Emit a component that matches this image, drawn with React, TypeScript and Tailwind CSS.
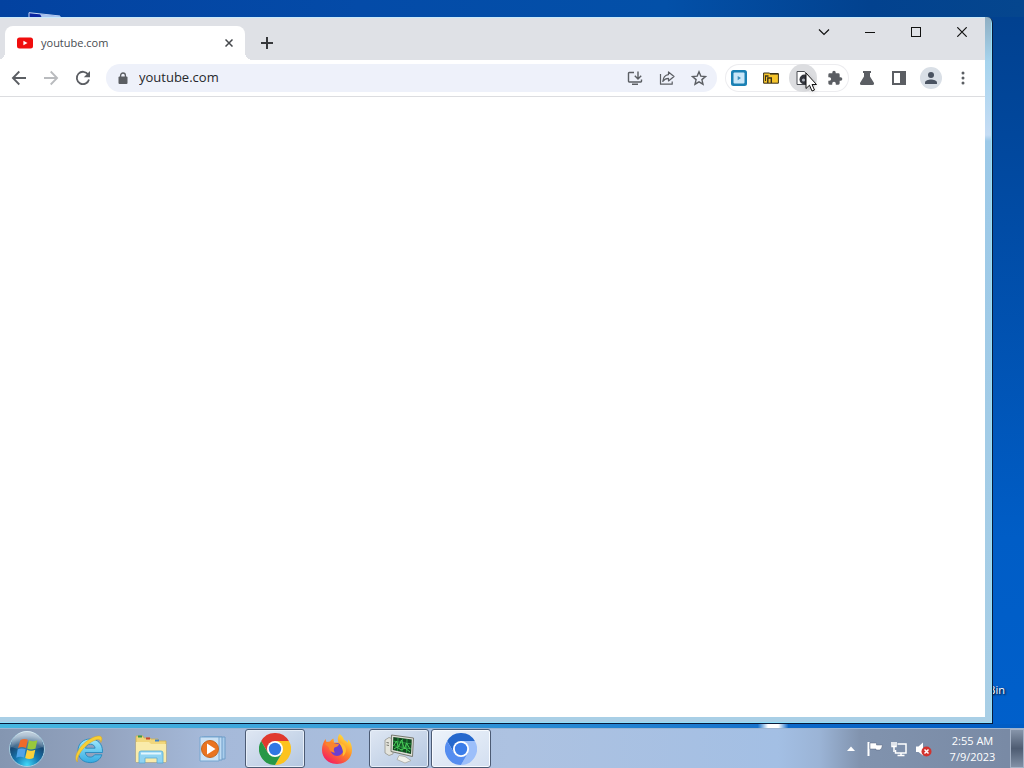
import React from 'react';

interface IconProps {
  className?: string;
}

const BackIcon = ({ className = 'size-4' }: IconProps) => (
  <svg viewBox="0 0 16 16" className={className} fill="none" stroke="currentColor" strokeWidth="1.8">
    <path d="M15 8H2M8.300 1.500 1.900 8l6.400 6.500" />
  </svg>
);

const ReloadIcon = () => (
  <svg viewBox="0 0 16 16" className="size-4">
    <path d="M13.200 4.600A6.200 6.200 0 1 0 14 9.500" fill="none" stroke="currentColor" strokeWidth="1.800" />
    <path d="M15 1v6.200H8.800z" fill="currentColor" />
  </svg>
);

const LockIcon = () => (
  <svg viewBox="0 0 10 13" className="h-[13px] w-2.5">
    <rect x="0.500" y="4.500" width="9" height="7.500" rx="1" fill="currentColor" />
    <path d="M2.600 5V3.400a2.400 2.400 0 0 1 4.800 0V5" fill="none" stroke="currentColor" strokeWidth="1.300" />
  </svg>
);

const InstallIcon = () => (
  <svg viewBox="0 0 16 16" className="size-4" fill="none" stroke="currentColor" strokeWidth="1.400">
    <path d="M7 2.500H2.200q-.7 0-.7.7v8.100q0 .7.7.7h11.600q.7 0 .7-.7V9.500M5 14.300h6" />
    <path d="M11 1.500v7M7.800 5.800 11 9l3.200-3.200" />
  </svg>
);

const ShareIcon = () => (
  <svg viewBox="0 0 16 16" className="size-4" fill="none" stroke="currentColor" strokeWidth="1.200" strokeLinejoin="round">
    <path d="M1.500 4v10.200h11.700v-2.700" />
    <path d="M9.500 2v2.600C6 5 4.200 7.500 3.800 11.500c1.500-2.300 3.200-3.200 5.700-3.200V11L15 6.500z" />
  </svg>
);

const StarIcon = () => (
  <svg viewBox="0 0 16 16" className="size-4" fill="none" stroke="currentColor" strokeWidth="1.400">
    <path d="m8 1.800 1.800 4.300 4.700.4-3.600 3.100 1.100 4.600L8 11.800l-4 2.400 1.100-4.600-3.600-3.100 4.700-.4z" />
  </svg>
);

const PlayerExtIcon = () => (
  <svg viewBox="0 0 16 16" className="size-4">
    <rect width="16" height="16" rx="2.500" fill="#1a80b4" />
    <rect x="2.500" y="2.500" width="11" height="11" rx="1" fill="#c9e6f8" />
    <path d="M6.700 6v4.200L10 8z" fill="#3d8fbd" />
  </svg>
);

const FolderExtIcon = () => (
  <svg viewBox="0 0 16 12" className="h-3 w-4">
    <path d="M.6 1h5.600l1 .8h8.200v9.400H.6z" fill="#f5c42c" stroke="#39301a" />
    <path d="M7 1.700h8.400" stroke="#39301a" strokeWidth="1.400" />
    <path d="M2 4h3.500M4.800 11V6h3.500v5" fill="none" stroke="#39301a" strokeWidth="1.400" />
    <path d="M2.500 4v5" stroke="#39301a" />
  </svg>
);

const PageExtIcon = () => (
  <svg viewBox="0 0 16 16" className="size-4">
    <path d="M2 1.500h7.500l2.500 3v10H2z" fill="#fff" stroke="#4a4d52" />
    <circle cx="9.500" cy="9.500" r="5" fill="#33363d" />
    <circle cx="8.500" cy="10" r="1.600" fill="#aeb4bd" />
  </svg>
);

const PuzzleIcon = () => (
  <svg viewBox="0 0 24 24" className="size-4" fill="currentColor">
    <path d="M20.500 11H19V7a2 2 0 0 0-2-2h-4V3.500a2.500 2.500 0 0 0-5 0V5H4a2 2 0 0 0-2 2v3.800h1.500a2.700 2.700 0 0 1 0 5.400H2V20a2 2 0 0 0 2 2h3.800v-1.500a2.700 2.700 0 0 1 5.400 0V22H17a2 2 0 0 0 2-2v-4h1.500a2.500 2.500 0 0 0 0-5z" />
  </svg>
);

const FlaskIcon = () => (
  <svg viewBox="0 0 16 16" className="size-4" fill="currentColor">
    <path d="M4 1h8v2h-1v3.500l4 6.500q.6 2-1.500 2h-11Q.4 15 1 13l4-6.500V3H4z" />
  </svg>
);

const SidePanelIcon = () => (
  <svg viewBox="0 0 16 16" className="size-4">
    <path fillRule="evenodd" d="M1 1h14v14H1zM3 3v10h6V3z" fill="currentColor" />
  </svg>
);

const PersonIcon = () => (
  <svg viewBox="0 0 14 14" className="size-3.5" fill="currentColor">
    <circle cx="7" cy="4" r="3" />
    <path d="M1 13v-1.500C1 9.500 4.500 8.500 7 8.500s6 1 6 3V13z" />
  </svg>
);

const MoreIcon = () => (
  <svg viewBox="0 0 16 16" className="size-4" fill="currentColor">
    <circle cx="8" cy="3" r="1.500" />
    <circle cx="8" cy="8" r="1.500" />
    <circle cx="8" cy="13" r="1.500" />
  </svg>
);

const StartOrb = () => (
  <svg viewBox="0 0 38 38" className="size-[38px]">
    <defs>
      <radialGradient id="orb" cx="50%" cy="95%" r="85%">
        <stop offset="0" stopColor="#3fd8f8" />
        <stop offset="0.400" stopColor="#1679b2" />
        <stop offset="0.750" stopColor="#174873" />
        <stop offset="1" stopColor="#6d8fae" />
      </radialGradient>
      <linearGradient id="orbShine" x2="0" y2="1">
        <stop offset="0" stopColor="#fff" stopOpacity="0.600" />
        <stop offset="1" stopColor="#fff" stopOpacity="0.100" />
      </linearGradient>
    </defs>
    <circle cx="19" cy="19" r="17.500" fill="url(#orb)" stroke="#a5cde0" />
    <path d="M3 17a16 16 0 0 1 32 0q-16 6-32 0z" fill="url(#orbShine)" />
    <path d="M12.500 10q4-2 7.300-.2L18 18q-4-1.800-8 0z" fill="#ef6a2a" />
    <path d="M21 10.300q4 2 8.300 0L27.500 18.500q-4.500 2-8.300 0z" fill="#98c83c" />
    <path d="M9.700 19.300q4-1.800 8 0L16 27.500q-4-1.600-7.700.2z" fill="#4fa3e8" />
    <path d="M19 19.800q4 1.800 8.300 0L25.500 28q-4.300 2-8.300 0z" fill="#fbd13b" />
  </svg>
);

const ExplorerEIcon = () => (
  <svg viewBox="0 0 32 32" className="size-8">
    <defs>
      <linearGradient id="ieBlue" x2="0" y2="1">
        <stop offset="0" stopColor="#9fe8fc" />
        <stop offset="1" stopColor="#35abe2" />
      </linearGradient>
    </defs>
    <path
      d="M29.500 19.500H12.300c.2 3 2.300 4.600 4.900 4.600 2 0 3.600-.9 4.500-2.300h7.200C27.300 26.700 23 29.600 17.200 29.600 10 29.600 5 24.800 5 17.800 5 10.700 10 6 17.200 6c7.600 0 12.300 5 12.300 12.200zM12.500 15.200h9.600c-.3-2.500-2-4-4.700-4-2.600 0-4.400 1.500-4.900 4z"
      fill="url(#ieBlue)"
      stroke="#2689bd"
      strokeWidth="0.900"
    />
    <path d="M4.500 29C-.5 25 6 13 15.500 7 22 2.800 28 1.500 28.800 5c.3 1.300-.2 3-1 4.500.2-2.500-1.500-3.500-4.600-2.700-4 1-8.500 4.200-12 8C6.500 19.700 3.500 25.500 4.500 29z" fill="#f7cf35" stroke="#dca51a" strokeWidth="0.500" />
  </svg>
);

const FilesIcon = () => (
  <svg viewBox="0 0 32 32" className="size-8">
    <path d="M1 5V3h7l1 2h6l1 1h7l1 2h7v21H1z" fill="#f1d77c" stroke="#cfaf52" strokeWidth="0.800" />
    <path d="M3 3.500h4" stroke="#3a9a46" strokeWidth="2" />
    <path d="M11 5.500h4" stroke="#c9452e" strokeWidth="2" />
    <path d="M20 7.500h4" stroke="#3f83c8" strokeWidth="2" />
    <path d="M1 9h13l2 2h15v18H1z" fill="#f9ebaa" />
    <path d="M4 30V20q0-2 2-2h20q2 0 2 2v10h-6v-5H10v5z" fill="#8fd3f2" stroke="#58a9d4" strokeWidth="0.800" />
    <path d="M6 20.500h20" stroke="#e3f6ff" strokeWidth="2" />
  </svg>
);

const MediaPlayerIcon = () => (
  <svg viewBox="0 0 28 28" className="size-7">
    <path d="M5 2h21v22H5z" fill="#a9cdec" stroke="#6e9dc8" />
    <path d="M3 2h20v23H3z" fill="#bfdcf3" stroke="#6e9dc8" />
    <path d="M1 2h19v24H1z" fill="#cbe2f5" stroke="#77a6d0" />
    <circle cx="11" cy="14" r="8.500" fill="#ea7420" stroke="#c4671f" />
    <path d="M8 8.500v11l8.500-5.500z" fill="#fff" />
  </svg>
);

const ChromeIcon = () => (
  <svg viewBox="0 0 32 32" className="size-8">
    <path d="M16 8h13.860A16 16 0 0 0 2.140 8L9.100 20z" fill="#e0392e" />
    <path d="M29.860 8A16 16 0 0 1 16 32l6.900-12L16 8z" fill="#fcc31e" />
    <path d="M2.140 8A16 16 0 0 0 16 32l6.900-12L9.100 20z" fill="#279847" />
    <circle cx="16" cy="16" r="8" fill="#fff" />
    <circle cx="16" cy="16" r="6.200" fill="#2f77e4" />
  </svg>
);

const ChromiumIcon = () => (
  <svg viewBox="0 0 32 32" className="size-8">
    <path d="M16 8h13.860A16 16 0 0 0 2.140 8L9.100 20z" fill="#2568cd" />
    <path d="M29.860 8A16 16 0 0 1 16 32l6.900-12L16 8z" fill="#9cbffa" />
    <path d="M2.140 8A16 16 0 0 0 16 32l6.900-12L9.100 20z" fill="#558df0" />
    <circle cx="16" cy="16" r="8" fill="#fff" />
    <circle cx="16" cy="16" r="6.200" fill="#3b7de9" />
  </svg>
);

const FirefoxIcon = () => (
  <svg viewBox="0 0 32 32" className="size-8">
    <defs>
      <linearGradient id="fox" x1="0.850" y1="0.100" x2="0.250" y2="0.950">
        <stop offset="0" stopColor="#ffe340" />
        <stop offset="0.450" stopColor="#ff8a24" />
        <stop offset="1" stopColor="#f5215e" />
      </linearGradient>
    </defs>
    <path d="M18.500 1c3 2 4 4 4.500 6 1.500.5 3 1.800 4 3V6.500C30 9 31 13 31 17c0 8-6.500 14-15 14S1 25 1 17c0-4 1.200-8 3.500-11l1 3 3.500-.500C10 7 11 6 12.500 5.500l.5 4h4.500C16 6 17 3 18.500 1z" fill="url(#fox)" />
    <circle cx="16" cy="16.500" r="6.500" fill="#6b3fcf" />
    <path d="M4 11c3-2.500 7-2.500 9-.500l5 .5c-.5 2.500-2.500 3-4.500 3.500-1 1.500-1 3.500.5 5-3.500 0-6-2-6-5z" fill="#fa842e" />
    <path d="M18 10c4 0 7 3 7 7 0 3-1.500 5-3.500 6.500 1-3 1-8-3.500-13.500z" fill="#ffbd33" />
  </svg>
);

const MonitorIcon = () => (
  <svg viewBox="0 0 32 32" className="size-8">
    <path d="M2 7 6 4.500l4 1.500v15l-4 1.500L2 20z" fill="#e4e4dc" stroke="#96968e" strokeWidth="0.800" />
    <path d="M3.500 9.500 6 10M3.500 12l2.500.5" stroke="#77776f" />
    <path d="M8.500 2 30.500 5 29.500 23.500 8 18.500z" fill="#dfe0d8" stroke="#777970" />
    <path d="M10.300 4 28.800 6.500 28 21 9.800 17z" fill="#134a22" />
    <path d="m10 8 18.500 3M10 12.500l18 3.500M15 5l-.5 13M19.500 5.500 19 19M24 6l-.5 14" stroke="#2aa244" strokeWidth="0.900" />
    <path d="m10.500 13 3-5 2 6 3-7 3 9 2-6 3.500 6M11 16l3-2 4 3 4-2 5 4" fill="none" stroke="#4bd058" />
    <path d="m16 22.500 6 1 6 4-6 2.500-8-3.500z" fill="#f0f0ea" stroke="#a2a298" strokeWidth="0.700" />
  </svg>
);

const FlagIcon = () => (
  <svg viewBox="0 0 16 16" className="size-4">
    <path d="M1.500 1v14" stroke="#fff" strokeWidth="2" />
    <path d="M3 2h6.500v2h6l-1 3.500-2 1.500H9V8H3z" fill="#fff" stroke="#54627c" strokeWidth="0.500" />
  </svg>
);

const NetworkIcon = () => (
  <svg viewBox="0 0 16 16" className="size-4" fill="none" stroke="#fff" strokeWidth="1.500">
    <path d="M6.500 3H15v9H4.500V9M10 12v2M6.500 14.500h7" />
    <path d="M1 1v4.500h4V1M3 1v10" />
  </svg>
);

const MutedIcon = () => (
  <svg viewBox="0 0 17 16" className="h-4 w-[17px]">
    <path d="M1 5.500h2.500L8 1.500v13L3.500 11H1z" fill="#fff" />
    <circle cx="11.500" cy="10.500" r="5" fill="#d2332e" />
    <path d="m9.500 8.500 4 4m0-4-4 4" stroke="#fff" strokeWidth="1.500" />
  </svg>
);

const toolButton = 'flex h-7 w-8 shrink-0 items-center justify-center';
const extButton = 'flex size-7 items-center justify-center rounded-full';
const windowButton = 'flex h-[30px] w-[46px] items-center justify-center';

const TabStrip = () => (
  <div className="flex h-[43px] shrink-0 items-end justify-between bg-[#dfe1e6] shadow-[inset_0_1px_0_#c9eafb]">
    <div className="flex items-end pl-[5px]">
      <div className="relative flex h-[34px] w-60 items-center rounded-t-lg bg-white pl-3 pr-2">
        <svg viewBox="0 0 16 12" className="h-3 w-4 shrink-0">
          <rect y="0.500" width="16" height="11" rx="2.500" fill="#f00d0d" />
          <path d="M6.400 3.700v4.600L10.500 6z" fill="#fff" />
        </svg>
        <span className="ml-2 flex-1 text-[11px] leading-4 text-[#484b50]">youtube.com</span>
        <button aria-label="Close tab" className="flex size-4 items-center justify-center text-[#45484c]">
          <svg viewBox="0 0 8 8" className="size-2" stroke="currentColor" strokeWidth="1.500">
            <path d="m0.500.5 7 7m0-7-7 7" />
          </svg>
        </button>
        <span className="absolute -left-2 bottom-0 size-2 bg-[radial-gradient(circle_at_top_left,transparent_8px,white_8px)]" />
        <span className="absolute -right-2 bottom-0 size-2 bg-[radial-gradient(circle_at_top_right,transparent_8px,white_8px)]" />
      </div>
      <button aria-label="New tab" className="ml-2 flex h-[34px] w-7 items-center justify-center text-[#36383b]">
        <svg viewBox="0 0 12 12" className="size-3" stroke="currentColor" strokeWidth="2">
          <path d="M6 0v12M0 6h12" />
        </svg>
      </button>
    </div>
    <div className="flex self-start">
      <button aria-label="Search tabs" className={windowButton}>
        <svg viewBox="0 0 12 8" className="h-2 w-3" fill="none" stroke="#111" strokeWidth="1.200">
          <path d="m1 1.500 5 5 5-5" />
        </svg>
      </button>
      <button aria-label="Minimize" className={windowButton}>
        <span className="h-px w-2.5 bg-[#111]" />
      </button>
      <button aria-label="Maximize" className={windowButton}>
        <span className="size-2.5 border border-[#111]" />
      </button>
      <button aria-label="Close" className={windowButton}>
        <svg viewBox="0 0 10 10" className="size-2.5" stroke="#111" strokeWidth="1.200">
          <path d="m.3.3 9.400 9.400m0-9.400L.3 9.700" />
        </svg>
      </button>
    </div>
  </div>
);

const Toolbar = () => (
  <div className="flex h-[37px] shrink-0 items-center border-b border-[#dcdde0] bg-white pl-[3px] pr-1.5 text-[#5b5e63]">
    <button aria-label="Back" className={toolButton}><BackIcon /></button>
    <button aria-label="Forward" className={`${toolButton} text-[#b9bbbe]`}>
      <BackIcon className="size-4 rotate-180" />
    </button>
    <button aria-label="Reload" className={toolButton}><ReloadIcon /></button>
    <div className="ml-[7px] flex h-7 flex-1 items-center rounded-full bg-[#eef1fa] pl-3 pr-0.5">
      <LockIcon />
      <input
        aria-label="Address"
        defaultValue="youtube.com"
        className="ml-[11px] min-w-0 flex-1 bg-transparent text-[13px] text-[#26282c] outline-none"
      />
      <button aria-label="Install" className={toolButton}><InstallIcon /></button>
      <button aria-label="Share" className={toolButton}><ShareIcon /></button>
      <button aria-label="Bookmark" className={toolButton}><StarIcon /></button>
    </div>
    <div className="ml-2 flex shrink-0 gap-1 rounded-full shadow-[inset_0_0_0_1px_#ececef]">
      <button aria-label="Player extension" className={extButton}><PlayerExtIcon /></button>
      <button aria-label="Folder extension" className={extButton}><FolderExtIcon /></button>
      <button aria-label="Page extension" className={`${extButton} relative bg-[#dcdde0]`}>
        <PageExtIcon />
        <svg viewBox="0 0 12 20" className="absolute left-4 top-2 z-10 h-5 w-3 drop-shadow-sm">
          <path d="M1 1v15.500l3.500-3.300L7 19l2.500-1-2.500-5.500h4.500z" fill="#fff" stroke="#111" />
        </svg>
      </button>
      <button aria-label="Extensions" className={extButton}><PuzzleIcon /></button>
    </div>
    <div className="ml-0.5 flex shrink-0">
      <button aria-label="Experiments" className={toolButton}><FlaskIcon /></button>
      <button aria-label="Side panel" className={toolButton}><SidePanelIcon /></button>
      <button aria-label="Profile" className={toolButton}>
        <span className="flex size-[22px] items-center justify-center rounded-full bg-[#d9dfe6] text-[#4a5361]">
          <PersonIcon />
        </span>
      </button>
      <button aria-label="Menu" className={toolButton}><MoreIcon /></button>
    </div>
  </div>
);

const TASKS = [
  { label: 'Internet Explorer', icon: <ExplorerEIcon />, state: 'pinned' },
  { label: 'Windows Explorer', icon: <FilesIcon />, state: 'pinned' },
  { label: 'Media Player', icon: <MediaPlayerIcon />, state: 'pinned' },
  { label: 'Chrome', icon: <ChromeIcon />, state: 'open' },
  { label: 'Firefox', icon: <FirefoxIcon />, state: 'pinned' },
  { label: 'System Monitor', icon: <MonitorIcon />, state: 'open' },
  { label: 'Chromium', icon: <ChromiumIcon />, state: 'active' },
];

const taskStyles: Record<string, string> = {
  pinned: 'border border-transparent',
  open: 'border border-[#4c5b74] bg-gradient-to-br from-[#dfe7f3] to-[#b4c7e0] shadow-[inset_0_0_0_1px_#e6eef8]',
  active: 'border border-[#4c5b74] bg-gradient-to-br from-[#edf3fb] to-[#d3dff0] shadow-[inset_0_0_0_1px_#f8fbff]',
};

const Taskbar = () => (
  <footer className="flex h-10 shrink-0 items-stretch border-t border-[#9db4d0] bg-[linear-gradient(90deg,#8496b1_0%,#93a3bf_10%,#a5b9d9_20%,#adc2e1_50%,#a3bfe4_76%,#9bb4d6_80%,#8193ae_84%,#7889a4_100%)]">
    <button aria-label="Start" className="flex w-[54px] items-center justify-center">
      <StartOrb />
    </button>
    <nav className="ml-[5px] flex flex-1 gap-0.5">
      {TASKS.map((task) => (
        <button
          key={task.label}
          aria-label={task.label}
          className={`flex w-[60px] items-center justify-center rounded-[3px] ${taskStyles[task.state]}`}
        >
          {task.icon}
        </button>
      ))}
    </nav>
    <div className="flex items-center">
      <button aria-label="Show hidden icons" className="flex w-6 justify-center">
        <svg viewBox="0 0 8 5" className="h-[5px] w-2"><path d="M0 5 4 .5 8 5z" fill="#fff" /></svg>
      </button>
      <button aria-label="Action Center" className="flex w-6 justify-center"><FlagIcon /></button>
      <button aria-label="Network" className="flex w-6 justify-center"><NetworkIcon /></button>
      <button aria-label="Volume" className="flex w-6 justify-center"><MutedIcon /></button>
    </div>
    <button className="flex w-[75px] flex-col items-center justify-center text-[11px] leading-4 text-white">
      <span>2:55 AM</span>
      <span>7/9/2023</span>
    </button>
    <button
      aria-label="Show desktop"
      className="w-3.5 border border-[#a5b2c6] bg-gradient-to-b from-[#8795aa] via-[#4e5c72] to-[#8190a6]"
    />
  </footer>
);

export default function App() {
  return (
    <div className="flex h-screen flex-col overflow-hidden bg-[linear-gradient(180deg,#01408e_0%,#014aa2_25%,#005dc6_70%,#0060cc_100%)] font-['Open_Sans','Noto_Sans',sans-serif]">
      <div className="relative flex min-h-0 flex-1 flex-col pb-1 pr-[31px] pt-[17px]">
        <div className="absolute inset-x-0 top-0 h-[17px] bg-[linear-gradient(90deg,#0342a0_0%,#044ba8_35%,#0350a8_65%,#02428f_85%,#05468e_100%)]" />
        {/* desktop shortcuts peeking out behind the window */}
        <svg viewBox="0 0 34 6" className="absolute left-7 top-3 h-1.5 w-[34px]">
          <path d="M1 6V.7L32 4v2" fill="#0b24a0" stroke="#c6d8f4" />
          <path d="m12 2 20 2v2H14z" fill="#a9c3ee" />
        </svg>
        <span className="absolute bottom-[30px] right-[19px] whitespace-nowrap text-[11px] leading-4 text-white [text-shadow:1px_1px_2px_#000]">
          Recycle Bin
        </span>
        <div className="absolute inset-x-0 bottom-0 h-1 bg-[linear-gradient(90deg,#46b7e0_0%,#3ba2da_30%,#2384d2_60%,#1672cc_74%,#fff_75%,#fff_76%,#0c68c8_77%,#005cc4_100%)]" />

        <main className="relative flex min-h-0 flex-1 flex-col rounded-tr-md border-b border-r border-[#0a1a3a] bg-[#add8ee] bg-[linear-gradient(180deg,#8faec2_0px,#a6d4ee_45px,#c5dcf4_118px,#9cc9e8_124px,#a9cfe6_100%)] pb-1.5 pr-[7px] shadow-[inset_-1px_-1px_0_#8fe0fb]">
          <TabStrip />
          <Toolbar />
          <section className="flex-1 bg-white" />
        </main>
      </div>
      <Taskbar />
    </div>
  );
}
